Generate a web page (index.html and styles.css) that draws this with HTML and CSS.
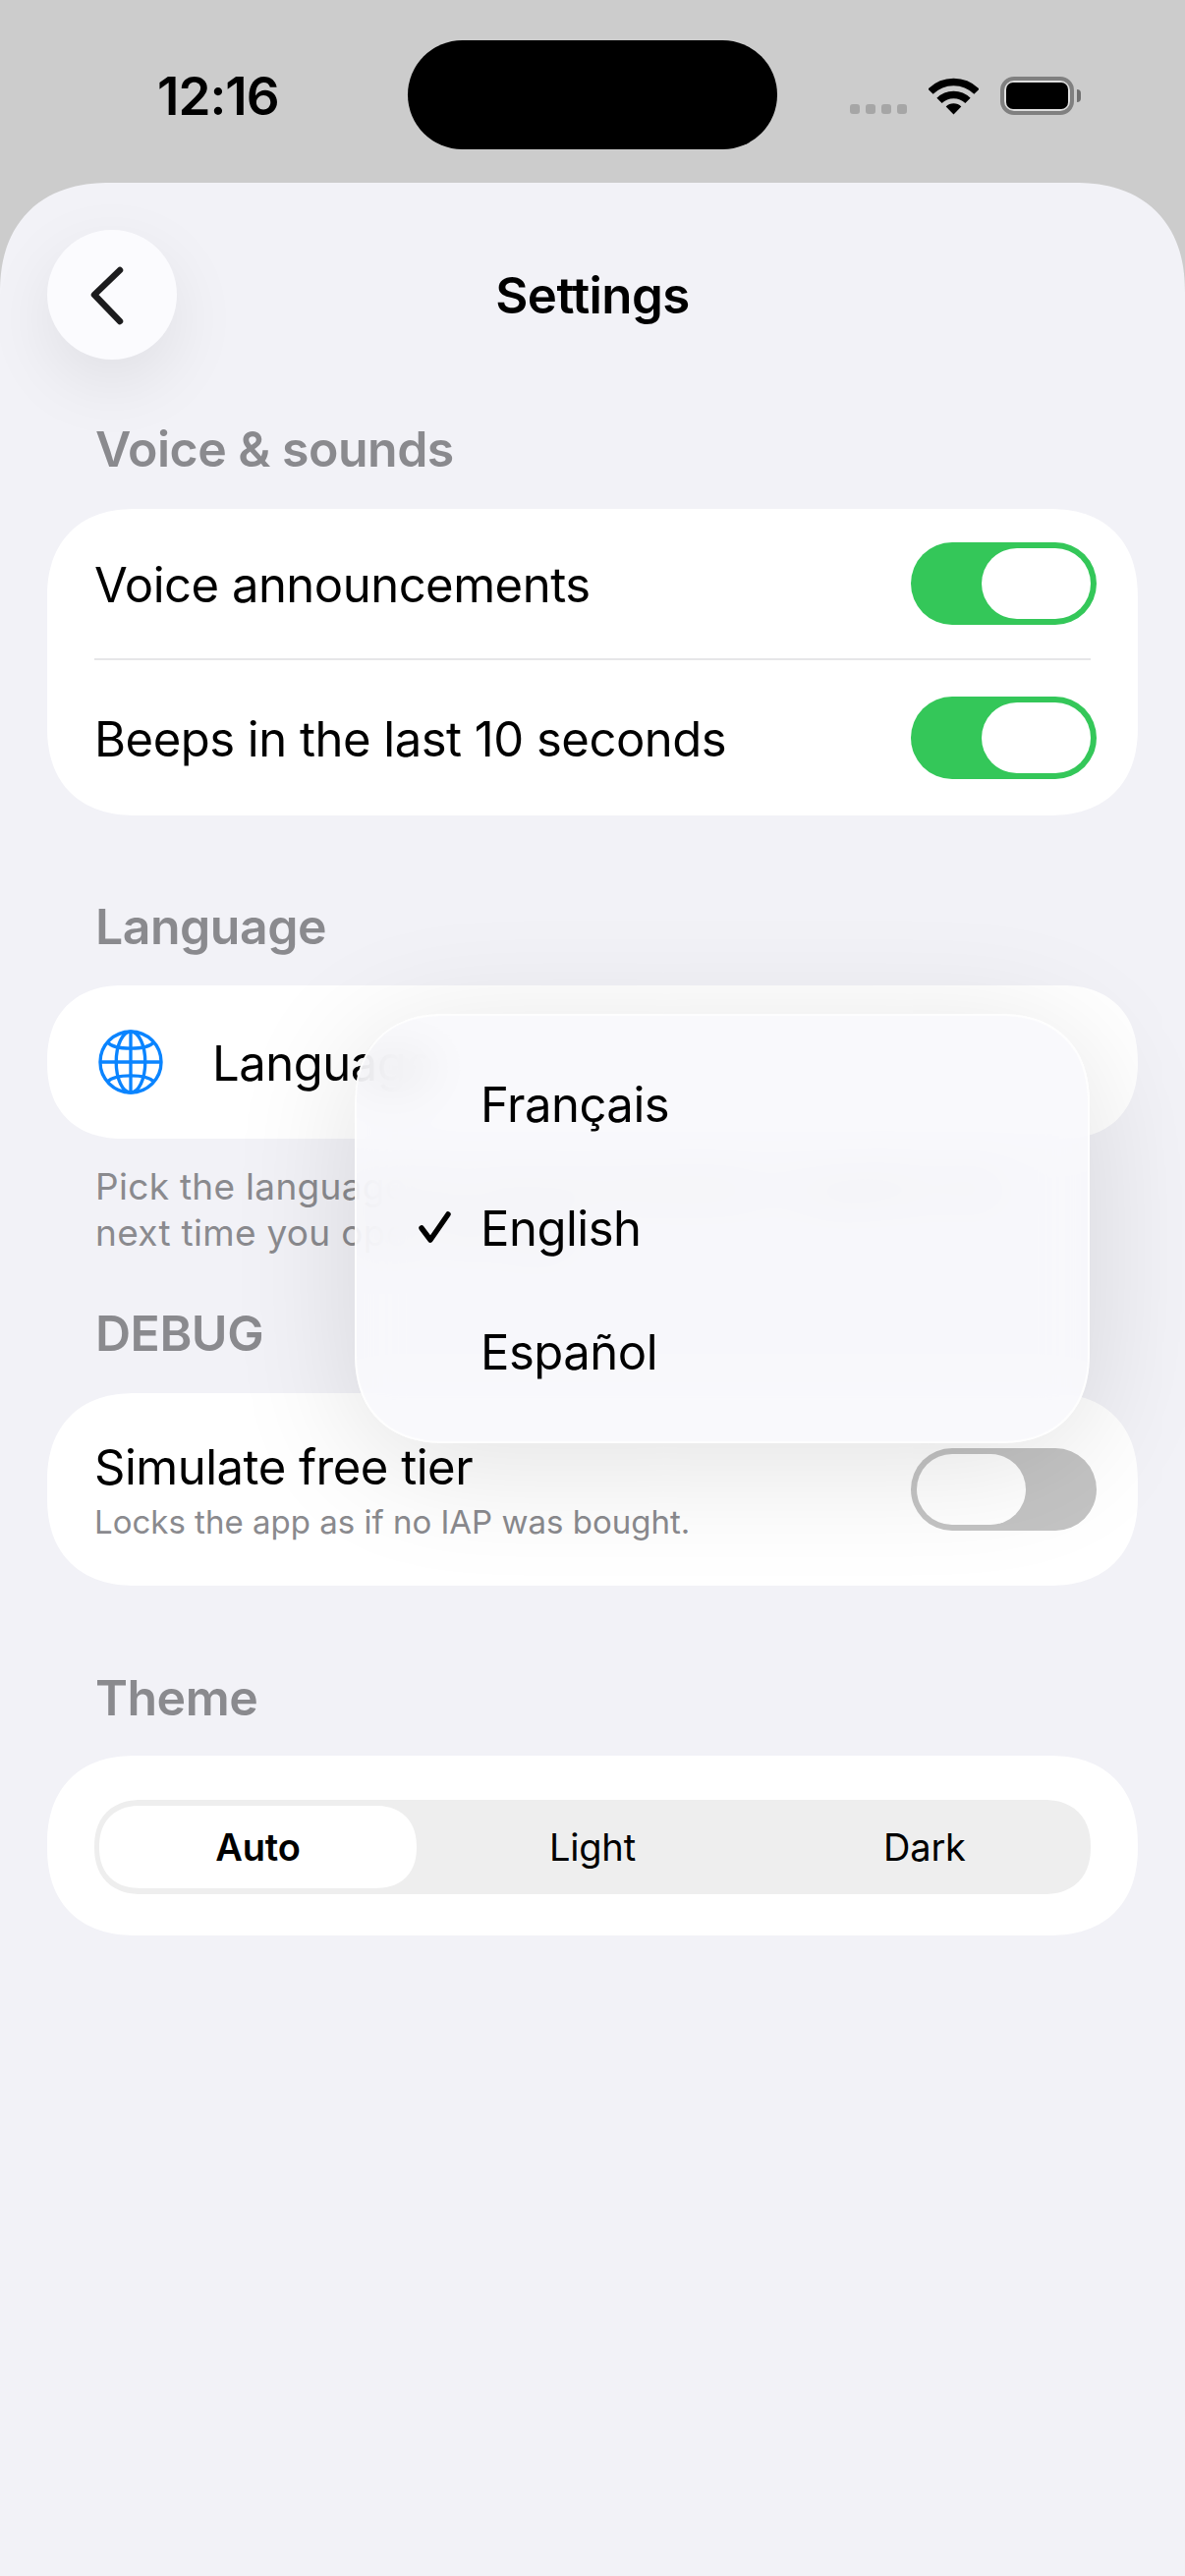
FILE: index.html
```html
<!DOCTYPE html>
<html lang="en">
<head>
  <meta charset="UTF-8" />
  <meta name="viewport" content="width=device-width, initial-scale=1.0"/>
  <title>Settings</title>
  <link rel="stylesheet" href="styles.css">
</head>
<body>
<div class="status-bar">
  <div class="time">12:16</div>
  <div class="island"></div>
  <div class="status-icons">
    <div class="signal"><span></span><span></span><span></span><span></span></div>
    <svg class="wifi" width="51" height="38" viewBox="0 0 51 38">
      <g fill="none" stroke="#000" stroke-width="7.5">
        <path d="M2 14.2A33.2 33.2 0 0 1 49 14.2"/>
        <path d="M11 23.4A20.7 20.7 0 0 1 40 23.4"/>
      </g>
      <path d="M25.500 37.500L17.700 29.500A11 11 0 0 1 33.300 29.500Z"/>
    </svg>
    <div class="battery"><div class="battery-fill"></div></div>
    <div class="battery-nub"></div>
  </div>
</div>

<div class="sheet">
  <div class="header">
    <div class="back">
      <svg width="40" height="64" viewBox="0 0 40 64">
        <path d="M34 7L8 32L34 59" fill="none" stroke="#1c1c1e" stroke-width="6.500" stroke-linecap="round" stroke-linejoin="round"/>
      </svg>
    </div>
    <h1 class="title">Settings</h1>
  </div>

  <h2 class="section-title">Voice &amp; sounds</h2>
  <div class="card">
    <div class="row row-first">
      <span class="row-label">Voice announcements</span>
      <div class="toggle on"><div class="thumb"></div></div>
    </div>
    <div class="row row-second">
      <span class="row-label">Beeps in the last 10 seconds</span>
      <div class="toggle on"><div class="thumb"></div></div>
    </div>
  </div>

  <h2 class="section-title language-title">Language</h2>
  <div class="card language-card">
    <svg class="globe" width="66" height="66" viewBox="0 0 67 67">
      <g fill="none" stroke="#0a84ff" stroke-width="3.400">
        <circle cx="33.500" cy="33.500" r="31.500"/>
        <ellipse cx="33.500" cy="33.500" rx="15" ry="31.500"/>
        <path d="M33.500 2V65M2 33.500H65"/>
        <path d="M9.500 13C17 21.500 50 21.500 57.500 13"/>
        <path d="M9.500 54C17 45.500 50 45.500 57.500 54"/>
      </g>
    </svg>
    <span class="row-label">Language</span>
  </div>
  <p class="footnote">Pick the language for announcements. It applies the<br>next time you open the app.</p>

  <h2 class="section-title debug-title">DEBUG</h2>
  <div class="card debug-card">
    <div>
      <div class="row-label">Simulate free tier</div>
      <div class="row-sub">Locks the app as if no IAP was bought.</div>
    </div>
    <div class="toggle off"><div class="thumb"></div></div>
  </div>

  <h2 class="section-title theme-title">Theme</h2>
  <div class="card theme-card">
    <div class="segments">
      <div class="segment selected"><span class="pill">Auto</span></div>
      <div class="segment">Light</div>
      <div class="segment">Dark</div>
    </div>
  </div>

  <div class="menu">
    <div class="menu-item">Français</div>
    <div class="menu-item">
      <svg class="check" width="33" height="33" viewBox="0 0 33 33">
        <path d="M3 17L12 29L30 3" fill="none" stroke="#000" stroke-width="5.500" stroke-linecap="round" stroke-linejoin="round"/>
      </svg>
      English
    </div>
    <div class="menu-item">Español</div>
  </div>
</div>
</body>
</html>
```

FILE: styles.css
```css
* {
  box-sizing: border-box;
}

body {
  margin: 0;
  width: 1206px;
  height: 2622px;
  overflow: hidden;
  background-color: #cccccc;
  font-family: "Inter", "Liberation Sans", sans-serif;
  color: #000;
}

/* status bar */
.status-bar {
  height: 186px;
  display: flex;
  padding-top: 41px;
}

.time {
  width: 415px;
  padding: 28px 0 0 160px;
  font-size: 53px;
  line-height: 58px;
  font-weight: 600;
  letter-spacing: -1px;
}

.island {
  width: 376px;
  height: 111px;
  border-radius: 56px;
  background-color: #000;
}

.status-icons {
  display: flex;
  align-items: flex-start;
  padding: 37px 0 0 74px;
}

.signal {
  display: flex;
  gap: 6px;
  margin-top: 28px;
}

.signal span {
  width: 10px;
  height: 10px;
  border-radius: 3px;
  background-color: #a6a6a6;
}

.wifi {
  margin: 1px 0 0 22px;
}

.battery {
  width: 75px;
  height: 39px;
  margin-left: 22px;
  padding: 2px;
  border: 4px solid #808080;
  border-radius: 14px;
  background-color: #dedede;
}

.battery-fill {
  width: 100%;
  height: 100%;
  border-radius: 7px;
  background-color: #000;
}

.battery-nub {
  width: 4px;
  height: 13px;
  margin: 13px 0 0 3px;
  border-radius: 0 6px 6px 0;
  background-color: #707070;
}

/* sheet */
.sheet {
  position: relative;
  height: 2436px;
  padding: 48px 48px 0;
  background-color: #f2f2f7;
  border-radius: 112px 112px 0 0;
  corner-shape: superellipse(1.2);
}

.header {
  position: relative;
  height: 132px;
  display: flex;
  align-items: center;
  justify-content: center;
  margin-bottom: 61px;
}

.back {
  position: absolute;
  left: 0;
  top: 0;
  width: 132px;
  height: 132px;
  display: flex;
  align-items: center;
  padding-left: 40px;
  border-radius: 50%;
  background-color: #fbfbfe;
  box-shadow: 0 24px 70px rgba(0, 0, 0, 0.08);
}

.title {
  margin: 0;
  font-size: 51px;
  font-weight: 600;
  letter-spacing: -0.6px;
}

.section-title {
  margin: 0 0 31px 49px;
  height: 60px;
  font-size: 50px;
  line-height: 60px;
  font-weight: 600;
  color: #8a8a8e;
  letter-spacing: -0.5px;
}

.language-title {
  margin-top: 83px;
  margin-bottom: 30px;
}

.debug-title {
  margin-top: 49px;
}

.theme-title {
  margin-top: 84px;
  margin-bottom: 29px;
}

.card {
  background-color: #fff;
  border-radius: 90px;
  corner-shape: superellipse(1.2);
  padding: 0 48px 0 48px;
}

.row {
  display: flex;
  align-items: center;
  justify-content: space-between;
}

.row-first {
  height: 154px;
  border-bottom: 2px solid #e6e6e8;
}

.row-second {
  height: 158px;
}

.row-label {
  font-size: 49px;
  line-height: 58px;
  letter-spacing: -0.5px;
}

.row .row-label,
.language-card .row-label {
  padding-top: 3px;
}

/* toggles */
.toggle {
  width: 189px;
  height: 84px;
  margin-right: -6px;
  padding: 6px;
  border-radius: 42px;
  display: flex;
}

.toggle.on {
  background-color: #34c759;
  justify-content: flex-end;
}

.toggle.off {
  background-color: #c4c4c4;
}

.thumb {
  width: 111px;
  height: 72px;
  border-radius: 36px;
  background-color: #fff;
}

/* language */
.language-card {
  height: 156px;
  display: flex;
  align-items: center;
  padding-left: 52px;
  gap: 50px;
}

.footnote {
  margin: 25px 0 49px 49px;
  font-size: 37px;
  line-height: 47px;
  letter-spacing: 0.3px;
  color: #8a8a8e;
  white-space: nowrap;
}

/* debug */
.debug-card {
  height: 196px;
  display: flex;
  align-items: center;
  justify-content: space-between;
}

.row-sub {
  margin-top: 7px;
  font-size: 33px;
  line-height: 38px;
  color: #8a8a8e;
}

/* theme */
.theme-card {
  height: 183px;
  padding-top: 45px;
}

.segments {
  height: 96px;
  display: flex;
  border-radius: 50px;
  corner-shape: superellipse(1.2);
  background-color: #eeeeee;
}

.segment {
  width: 33.33%;
  display: flex;
  align-items: center;
  justify-content: center;
  font-size: 38px;
  letter-spacing: -0.2px;
}

.segment.selected {
  padding: 6px 10px 6px 5px;
  font-weight: 600;
}

.pill {
  width: 100%;
  height: 100%;
  display: flex;
  align-items: center;
  justify-content: center;
  border-radius: 44px;
  corner-shape: superellipse(1.2);
  background-color: #fff;
}

/* popup menu */
.menu {
  position: absolute;
  left: 361px;
  top: 846px;
  width: 748px;
  height: 437px;
  padding: 27px 0 30px 126px;
  border-radius: 92px;
  corner-shape: superellipse(1.2);
  background-color: rgba(248, 248, 252, 0.86);
  border: 2px solid rgba(255, 255, 255, 0.7);
  backdrop-filter: blur(24px);
  box-shadow: 0 20px 130px rgba(0, 0, 0, 0.12);
}

.menu-item {
  position: relative;
  height: 126px;
  display: flex;
  align-items: center;
  font-size: 49px;
  letter-spacing: -0.5px;
}

.check {
  position: absolute;
  left: -63px;
  top: 46px;
}
```
